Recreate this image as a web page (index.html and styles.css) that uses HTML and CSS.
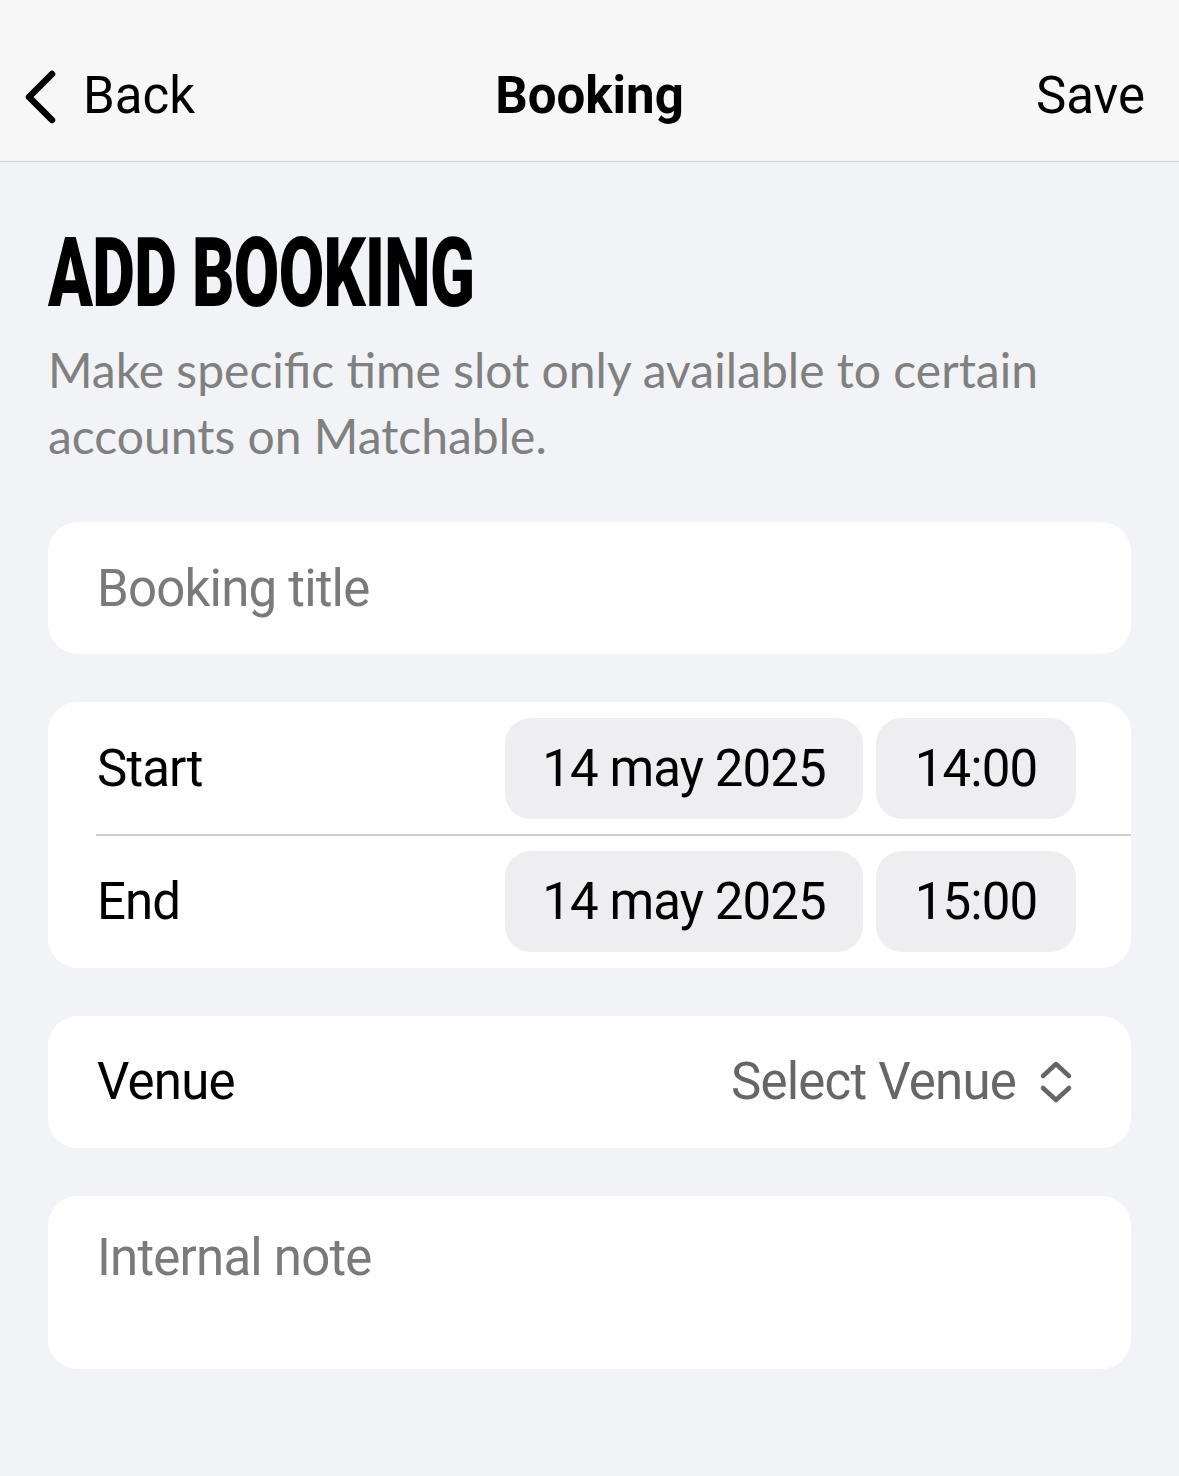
FILE: index.html
```html
<!DOCTYPE html>
<html lang="en">
<head>
<meta charset="utf-8">
<title>Booking</title>
<link rel="stylesheet" href="styles.css">
</head>
<body>
<header class="nav">
  <div class="nav-left">
    <svg class="back-icon" width="36" height="56" viewBox="0 0 36 56" aria-hidden="true">
      <path d="M30 5 L7 28 L30 51" fill="none" stroke="#000" stroke-width="6.5" stroke-linecap="round" stroke-linejoin="round"/>
    </svg>
    <span class="nav-back">Back</span>
  </div>
  <div class="nav-title">Booking</div>
  <div class="nav-right">Save</div>
</header>
<main class="content">
  <h1 class="heading"><span class="heading-text">ADD BOOKING</span></h1>
  <p class="subtitle">Make specific time slot only available to certain accounts on Matchable.</p>

  <div class="card card-single card-first">
    <span class="placeholder">Booking title</span>
  </div>

  <div class="card card-dates">
    <div class="date-row">
      <span class="row-label">Start</span>
      <div class="pills">
        <span class="pill pill-date">14 may 2025</span>
        <span class="pill pill-time">14:00</span>
      </div>
    </div>
    <div class="divider"></div>
    <div class="date-row">
      <span class="row-label">End</span>
      <div class="pills">
        <span class="pill pill-date">14 may 2025</span>
        <span class="pill pill-time">15:00</span>
      </div>
    </div>
  </div>

  <div class="card card-single card-venue">
    <span class="row-label">Venue</span>
    <span class="venue-select">Select Venue
      <svg class="updown" width="36" height="44" viewBox="0 0 36 44" aria-hidden="true">
        <path d="M5 16 L18 4 L31 16" fill="none" stroke="#666" stroke-width="4.5" stroke-linecap="round" stroke-linejoin="round"/>
        <path d="M5 28 L18 40 L31 28" fill="none" stroke="#666" stroke-width="4.5" stroke-linecap="round" stroke-linejoin="round"/>
      </svg>
    </span>
  </div>

  <div class="card card-note">
    <span class="placeholder">Internal note</span>
  </div>
</main>
</body>
</html>
```
FILE: styles.css
```css
* { box-sizing: border-box; }
html, body {
  margin: 0;
  padding: 0;
}
body {
  background: #f2f3f7;
  font-family: "Roboto", "Liberation Sans", sans-serif;
  color: #000;
  width: 1179px;
  min-height: 1476px;
}
.nav {
  height: 162px;
  background: #f7f7f7;
  border-bottom: 1.5px solid #cfcfd2;
  display: flex;
  align-items: center;
  justify-content: space-between;
  padding: 30px 34px 0 22px;
  position: relative;
  font-size: 51px;
}
.nav-left {
  display: flex;
  align-items: center;
  gap: 25px;
}
.back-icon { display: block; margin-top: 2px; }
.nav-back { font-weight: 400; }
.nav-title {
  position: absolute;
  left: 0;
  right: 0;
  top: 30px;
  bottom: 0;
  display: flex;
  align-items: center;
  justify-content: center;
  font-weight: 700;
  pointer-events: none;
}
.nav-right { font-weight: 400; }

.content {
  padding: 0 48px;
}
.heading {
  margin: 63px 0 0;
  font-size: 96px;
  line-height: 96px;
  font-weight: 900;
  height: 96px;
  white-space: nowrap;
}
.heading-text {
  display: inline-block;
  transform: scaleX(0.687);
  transform-origin: left center;
  letter-spacing: -1px;
}
.subtitle {
  margin: 16px 0 0;
  font-family: "Lato", "Open Sans", sans-serif;
  font-size: 48px;
  line-height: 66px;
  color: #808080;
  max-width: 1060px;
}
.card {
  background: #fff;
  border-radius: 30px;
  margin-top: 48px;
}
.card-single {
  height: 132px;
  display: flex;
  align-items: center;
  padding: 0 49px;
  font-size: 51px;
  letter-spacing: -0.8px;
}
.card-first { margin-top: 53px; }
.placeholder { color: #7a7a7c; }
.card-dates {
  font-size: 51px;
  letter-spacing: -0.9px;
}
.date-row {
  height: 132px;
  display: flex;
  align-items: center;
  justify-content: space-between;
  padding: 0 55px 0 49px;
}
.divider {
  height: 1.5px;
  background: #cfcfd2;
  margin-left: 48px;
}
.pills {
  display: flex;
  gap: 13px;
}
.pill {
  height: 101px;
  background: #eeeef0;
  border-radius: 26px;
  display: flex;
  align-items: center;
  justify-content: center;
}
.pill-date { width: 358px; }
.pill-time { width: 200px; }
.card-venue {
  justify-content: space-between;
  padding-right: 57px;
}
.venue-select {
  color: #666668;
  display: flex;
  align-items: center;
  gap: 22px;
}
.updown { display: block; }
.card-note {
  height: 173px;
  padding: 32px 49px 0;
  font-size: 51px;
  line-height: 60px;
  letter-spacing: -0.8px;
}
```
